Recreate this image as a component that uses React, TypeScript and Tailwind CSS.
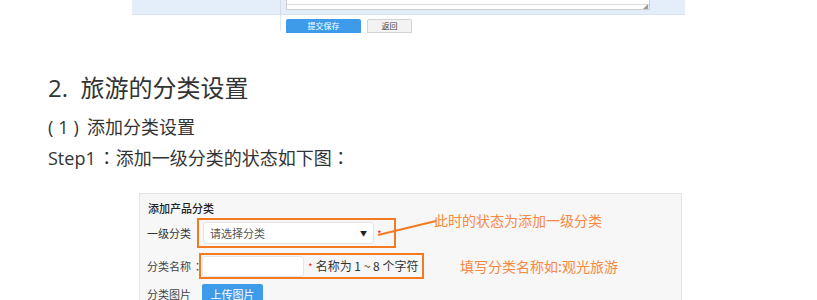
import React from "react";

const cjk = { fontFamily: '"Open Sans", "Noto Sans CJK SC", sans-serif' };
const cjkOnly = { fontFamily: '"Noto Sans CJK SC", sans-serif' };
const colon = { fontFamily: '"Noto Sans CJK JP", sans-serif' };

export default function App() {
  return (
    <div className="relative w-[817px] h-[300px] overflow-hidden bg-white" style={cjk}>
      {/* top fragment of previous screenshot */}
      <div className="ml-[132px] w-[553px] h-[15px] bg-[#e3eefa] border-b border-[#d6e3f1] flex">
        <div className="w-[149px] h-full border-r border-[#d0dbe7]" />
        <div className="ml-[5px] w-[364px] h-[10px] bg-white border border-t-0 border-[#cfcfcf] relative">
          <div className="absolute left-0 right-0 top-[4px] border-t border-[#dcdcdc]" />
          <span className="absolute right-[1px] bottom-0 text-[5px] leading-none text-[#999]">◢</span>
        </div>
      </div>
      <div className="flex h-[16px]">
        <div className="ml-[280px] w-px h-full bg-[#e3e8ee]" />
        <div className="ml-[5px] mt-[4px] flex gap-[6px]">
          <div className="w-[75px] h-[14px] rounded-t-[2px] bg-[#3d9be9] text-white text-[8px] leading-[13px] text-center" style={cjkOnly}>
            提交保存
          </div>
          <div className="w-[45px] h-[14px] rounded-t-[2px] bg-[#f3f3f3] border border-[#d3d3d3] text-[#444] text-[8px] leading-[11px] text-center" style={cjkOnly}>
            返回
          </div>
        </div>
      </div>

      {/* article text */}
      <div className="pl-[48px] text-[#333]">
        <div className="mt-[40px] text-[24px] leading-[34px]">2.&nbsp; 旅游的分类设置</div>
        <div className="mt-[9px] text-[18px] leading-[26px] flex">
          <span>(</span>
          <span className="ml-[5px]">1</span>
          <span className="ml-[5px]">)</span>
          <span className="ml-[8px]">添加分类设置</span>
        </div>
        <div className="mt-[4px] text-[18px] leading-[26px]">
          Step1<span className="ml-[2px]" style={colon}>：</span>添加一级分类的状态如下图<span style={colon}>：</span>
        </div>
      </div>

      {/* embedded screenshot */}
      <div className="ml-[139px] mt-[22px] w-[543px] h-[120px] bg-[#f7f7f7] border border-[#e4e4e4] relative text-[#333]" style={cjkOnly}>
        <div className="pl-[8px] pt-[7px] text-[11px] leading-[14px] font-medium text-[#222]">添加产品分类</div>
        <div className="flex items-center mt-[3px] h-[30px]">
          <div className="pl-[7px] w-[57px] text-[11px] whitespace-nowrap">一级分类</div>
          <div className="w-[199px] h-[30px] border-2 border-[#f47a22] flex items-center pl-[4px]">
            <div className="w-[171px] h-[22px] bg-white border border-[#e3e3e3] rounded-[3px] flex items-center justify-between px-[6px] text-[11px] text-[#555]">
              <span>请选择分类</span>
              <span className="text-[7px] text-[#222]">▼</span>
            </div>
            <span className="ml-[3px] text-[#e33] text-[10px]">*</span>
          </div>
        </div>
        <div className="flex items-center mt-[5px] h-[26px]">
          <div className="pl-[7px] w-[59px] text-[11px] text-[#444] whitespace-nowrap">分类名称<span className="ml-[1px]" style={colon}>：</span></div>
          <div className="w-[225px] h-[26px] border-2 border-[#f47a22] flex items-center pl-[1px] whitespace-nowrap">
            <div className="w-[102px] h-[21px] bg-white border border-[#e6e6e6] rounded-[3px]" />
            <span className="ml-[4px] text-[#e33] text-[10px]">*</span>
            <span className="ml-[3px] text-[12px] text-[#333]">名称为 1 ~ 8 个字符</span>
          </div>
          <div className="ml-[36px] text-[14px] text-[#f7883f] whitespace-nowrap">填写分类名称如:观光旅游</div>
        </div>
        <div className="flex items-center mt-[5px] h-[20px]">
          <div className="pl-[7px] w-[62px] text-[11px] text-[#444] whitespace-nowrap">分类图片</div>
          <div className="w-[61px] h-[20px] bg-[#3d9be9] text-white text-[11px] leading-[20px] text-center rounded-t-[2px]">上传图片</div>
        </div>
        <div className="absolute left-[294px] top-[17px] text-[14px] leading-[18px] text-[#f7883f] whitespace-nowrap">此时的状态为添加一级分类</div>
        <svg className="absolute left-[236px] top-[24px]" width="62" height="20" viewBox="0 0 62 20">
          <line x1="2" y1="17" x2="60" y2="3" stroke="#f47a22" strokeWidth="2" />
        </svg>
      </div>
    </div>
  );
}
